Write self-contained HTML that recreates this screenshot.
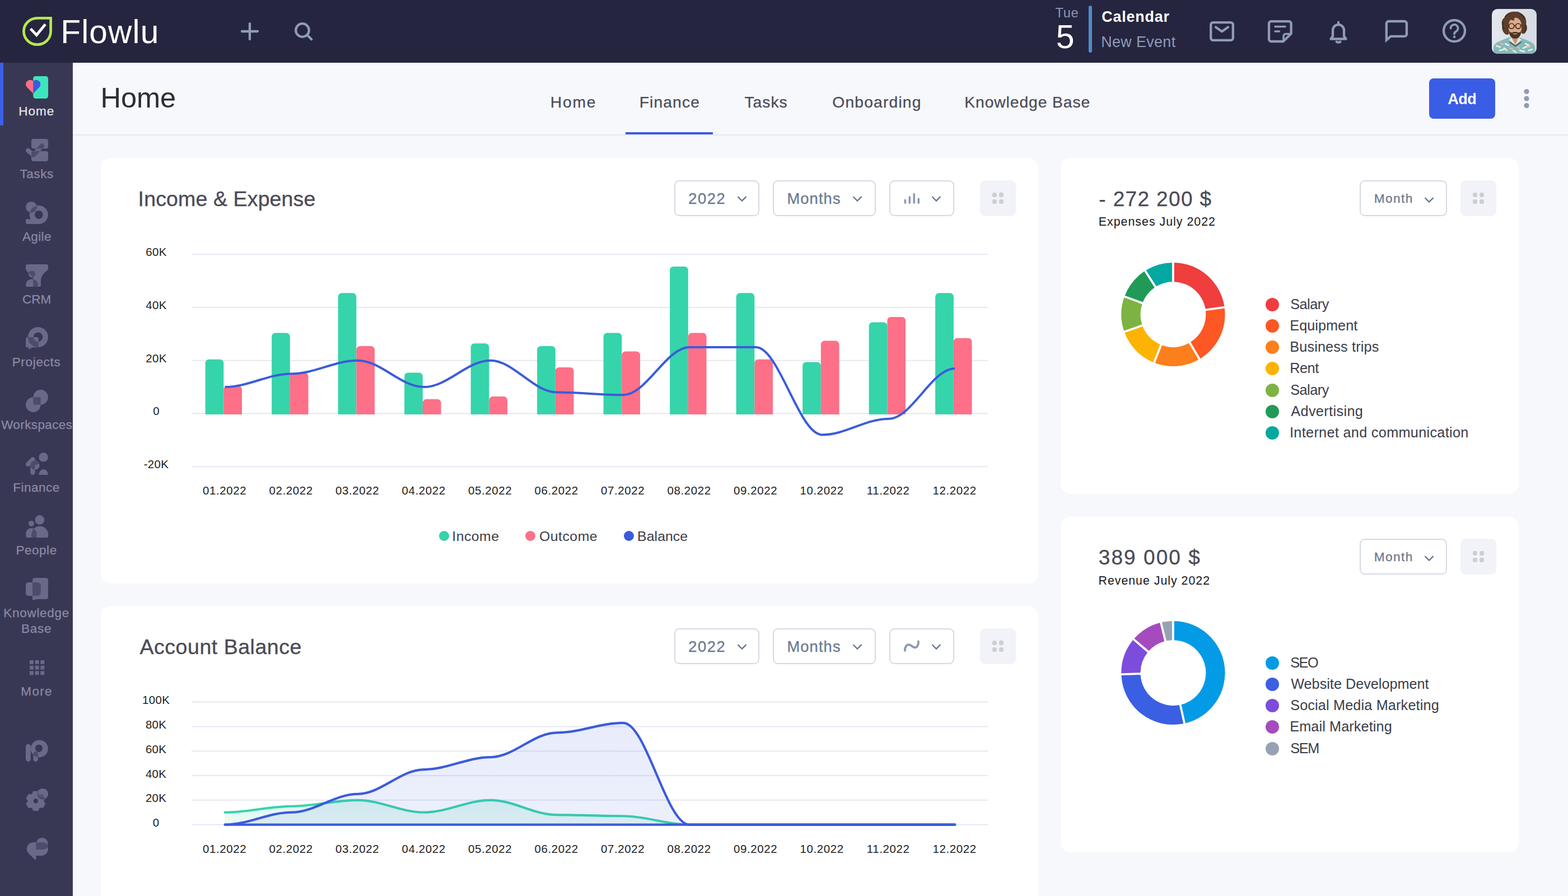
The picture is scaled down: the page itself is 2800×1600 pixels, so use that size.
<!DOCTYPE html>
<html lang="en"><head><meta charset="utf-8"><title>Flowlu - Home - Finance</title>
<style>
*{margin:0;padding:0}
html,body{width:2800px;height:1600px;overflow:hidden}
body{position:relative;background:#f7f8fc;font-family:"Liberation Sans",Arial,sans-serif;-webkit-font-smoothing:antialiased}
.a,.t{position:absolute;display:block}
.t{white-space:nowrap;line-height:1}
svg{overflow:visible}
svg text{font-family:"Liberation Sans",Arial,sans-serif}
.topbar{left:0;top:0;width:2800px;height:112px;background:#26253f}
.sidebar{left:0;top:112px;width:130px;height:1488px;background:#393854}
.main{left:130px;top:112px;width:2670px;height:1488px}
.card{background:#fff;border-radius:18px}
</style></head><body>
<header class="a topbar">
<svg class="a" style="left:36px;top:26px" width="62" height="60" viewBox="36 26 62 60">
<path d="M66.5 32.3 H90.6 V56 A24.1 23.7 0 1 1 66.5 32.3 Z" fill="none" stroke="#b4e84e" stroke-width="4.7" stroke-linejoin="miter"/>
<path d="M54.6 51.3 L65.3 62.6 L81 43.2" fill="none" stroke="#fff" stroke-width="4.8"/>
</svg>
<span class="t" style="left:108.31px;top:28px;font-size:58.6px;letter-spacing:1.12px;color:#fff;">Flowlu</span>
<svg class="a" style="left:420px;top:30px" width="150" height="52" viewBox="420 30 150 52" fill="none" stroke="#8f9cb5" stroke-width="4.3" stroke-linecap="round">
<path d="M432 56H460M446 42.200V70"/>
<circle cx="540" cy="54" r="11.8"/><path d="M548.6 62.6L556.3 70.3"/>
</svg>
<span class="t" style="left:1884.53px;top:12px;font-size:23.6px;letter-spacing:0.7px;color:#8d97b3;">Tue</span>
<span class="t" style="left:1885.64px;top:37px;font-size:59px;color:#fff;">5</span>
<div class="a " style="left:1944px;top:10px;width:6px;height:84px;background:#4f8ccc;border-radius:3px"></div>
<span class="t" style="left:1967.23px;top:17px;font-size:26.8px;letter-spacing:0.87px;color:#fff;font-weight:700;">Calendar</span>
<span class="t" style="left:1966.16px;top:62px;font-size:26.8px;letter-spacing:0.42px;color:#8f9bb7;">New Event</span>
<svg class="a" style="left:2150px;top:28px" width="480" height="56" viewBox="2150 28 480 56" fill="none" stroke="#8f9cb5" stroke-width="4.3" stroke-linecap="round" stroke-linejoin="round">
<rect x="2162.2" y="40.2" width="39.6" height="31.6" rx="4"/><path d="M2171 48.5L2182 56.3L2193 48.5"/>
<path d="M2266 42.2a4 4 0 0 1 4-4h31.6a4 4 0 0 1 4 4V60L2291.6 74H2270a4 4 0 0 1-4-4Z"/><path d="M2305 60.5H2296a4 4 0 0 0-4 4V73" stroke-width="3.6"/><path d="M2277 47.5H2295M2277 56H2284.5" stroke-width="3.6"/>
<path d="M2376.5 69.5H2403.5L2400 64.5V54A10 10 0 0 0 2380 54V64.5Z"/><path d="M2390 41.5V39.5M2386.5 74.5Q2390 77 2393.500 74.5" stroke-width="4"/>
<path d="M2475.800 71.500V42a4 4 0 0 1 4-4H2507.900a4 4 0 0 1 4 4V60.900a4 4 0 0 1-4 4H2483.500Z" stroke-linejoin="miter" stroke-miterlimit="6"/>
<circle cx="2597" cy="55" r="19"/><path d="M2590.500 50.5a6.5 6.500 0 1 1 9.500 5.700c-2.200 1.200-3 2.300-3 4.300" stroke-width="3.8"/><circle cx="2597" cy="65.800" r="2.400" fill="#8f9cb5" stroke="none"/>
</svg>
<div class="a avatar" style="left:2664px;top:16px;width:80px;height:80px;border-radius:10px;overflow:hidden"><svg width="80" height="80" viewBox="0 0 80 80" style="overflow:hidden">
<defs><linearGradient id="avbg" x1="0" y1="0" x2="1" y2="0"><stop offset="0" stop-color="#e4e7ed"/><stop offset="1" stop-color="#d6dae2"/></linearGradient></defs>
<rect width="80" height="80" fill="url(#avbg)"/>
<path d="M3 80V68C4 63 8 60 15 57L30 51H50L66 57C72 60 76 63 77 68V80Z" fill="#86b9ba"/>
<path d="M8 66l7 2M14 74l8-2M24 62l6 3M22 70l5 4M56 70l7-3M60 62l6 3M50 74l8 2M66 74l6-2M38 74l5 3" stroke="#e9efe9" stroke-width="2.600" stroke-linecap="round" fill="none"/>
<path d="M16 62l4 1M32 70l4 1M64 68l4-1M46 68l3 2" stroke="#e8b9a0" stroke-width="2.600" stroke-linecap="round" fill="none"/>
<path d="M34 47H49V58L42 66L33 58Z" fill="#c9977c"/>
<path d="M30 55l5-4 7 13ZM53 55l-5-4-6 13Z" fill="#dfe8e6"/>
<path d="M31 57.500l4 3 7 5 7-5 4-3-1 3-10 7-10-7Z" fill="#3c4a55"/>
<path d="M41 5C33 4 25 9 22 16C17 19 17 27 19 30C17 34 19 41 24 45C27 47 31 46 31 42L30 28C33 24 37 20 42 19C47 20 51 23 52 28L53 43C56 46 60 44 61 40C64 36 63 30 61 27C63 20 59 11 52 8C49 5 45 4 41 5Z" fill="#5b3f2b"/>
<path d="M24 14q3-5 8-6M50 8q6 3 8 9M20 24q-2 6 1 10M60 30q2 5-1 10" stroke="#3f2a1c" stroke-width="2" fill="none" stroke-linecap="round"/>
<path d="M30 30C30 21 35 15.500 41.500 15.500S53 21 53 30V39C53 47 48 52 41.500 52S30 47 30 39Z" fill="#dbab8e"/>
<path d="M30 36C30 47 35 53 41.500 53S53 47 53 36C52 41 50 42.500 47 42C44 40.500 39 40.500 36 42C33 42.500 31 41 30 36Z" fill="#4e3323"/>
<path d="M36.500 43.500q5 3.500 10 0q-5 1-10 0Z" fill="#f3e9e4"/>
<circle cx="35.200" cy="30.600" r="4.600" fill="none" stroke="#4a2c1c" stroke-width="1.700"/><circle cx="47" cy="30.600" r="4.600" fill="none" stroke="#4a2c1c" stroke-width="1.700"/><path d="M39.800 30h2.600M30.600 29.500l-2-1M51.600 29.500l2-1" stroke="#4a2c1c" stroke-width="1.500"/>
<path d="M33 19q3-5 8-4q-2 3-1 6q-4-1-7-2Z" fill="#5b3f2b"/>
</svg></div>
</header>
<nav class="a sidebar">
<div class="a " style="left:0px;top:0px;width:6px;height:112px;background:#3d60e8"></div>
<svg class="a" style="left:45px;top:24px" width="40" height="40" viewBox="0 0 40 40"><rect x="14.200" y="0" width="26.800" height="40" rx="4.500" fill="#3ee5bc"/><path d="M14.200 31L2.700 19.300A7.700 7.700 0 0 1 14.200 9.100Z" fill="#fd6f86"/><path d="M14.200 31L25.700 19.300A7.700 7.700 0 0 0 14.200 9.100Z" fill="#3b5bdb"/></svg>
<span class="t" style="left:33.35px;top:76px;font-size:22.5px;letter-spacing:0.95px;color:#e6e6ee;-webkit-text-stroke:.25px;">Home</span>
<svg class="a" style="left:45px;top:136px" width="40" height="40" viewBox="0 0 40 40"><defs><clipPath id="ck1"><rect x="11" y="0" width="30" height="17.500" rx="4"/><rect x="11" y="21.700" width="30" height="18.300" rx="4"/></clipPath></defs><rect x="11" y="0" width="30" height="17.500" rx="4" fill="#6a6987"/><rect x="11" y="21.700" width="30" height="18.300" rx="4" fill="#6a6987"/><path id="ckp" d="M5 20.800L14.700 28.800L30 12.500" stroke="#6a6987" stroke-width="8" stroke-linecap="round" stroke-linejoin="round" fill="none"/><path d="M5 20.800L14.700 28.800L30 12.500" stroke="#4d4c6c" stroke-width="8" stroke-linecap="round" stroke-linejoin="round" fill="none" clip-path="url(#ck1)"/></svg>
<span class="t" style="left:35.4px;top:188px;font-size:22.5px;letter-spacing:0.61px;color:#8b8aa6;-webkit-text-stroke:.25px;">Tasks</span>
<svg class="a" style="left:45px;top:248px" width="40" height="40" viewBox="0 0 40 40"><defs><clipPath id="ck2"><circle cx="24.300" cy="23.500" r="16.500"/></clipPath></defs><circle cx="10.900" cy="9.800" r="9.900" fill="#6a6987"/><circle cx="24.300" cy="23.500" r="16.500" fill="#6a6987"/><path d="M1 31.300H24V40H4a3 3 0 0 1-3-3Z" fill="#6a6987"/><circle cx="24.300" cy="23.500" r="7.400" fill="#393854"/><circle cx="10.900" cy="9.800" r="9.900" fill="#4d4c6c" clip-path="url(#ck2)"/></svg>
<span class="t" style="left:39.9px;top:300px;font-size:22.5px;letter-spacing:0.39px;color:#8b8aa6;-webkit-text-stroke:.25px;">Agile</span>
<svg class="a" style="left:45px;top:360px" width="40" height="40" viewBox="0 0 40 40"><defs><clipPath id="ck3"><path id="fn" d="M1 3a3 3 0 0 1 3-3h34a3 3 0 0 1 3 3v4.500q0 2-2 3.500C33 16 28 21 28 30v7a3 3 0 0 1-3 3H14.200V26q0-2-1.700-4L2.500 11.500Q1 10 1 8Z"/></clipPath></defs><path d="M1 3a3 3 0 0 1 3-3h34a3 3 0 0 1 3 3v4.500q0 2-2 3.500C33 16 28 21 28 30v7a3 3 0 0 1-3 3H14.200V26q0-2-1.700-4L2.500 11.500Q1 10 1 8Z" fill="#6a6987"/><circle cx="12" cy="17.500" r="6" fill="#6a6987"/><path d="M1 37a11 10.500 0 0 1 22 0a3 3 0 0 1-3 3H4a3 3 0 0 1-3-3Z" fill="#6a6987"/><g clip-path="url(#ck3)" fill="#4d4c6c"><circle cx="12" cy="17.500" r="6"/><path d="M1 37a11 10.500 0 0 1 22 0a3 3 0 0 1-3 3H4a3 3 0 0 1-3-3Z"/></g></svg>
<span class="t" style="left:39.93px;top:412px;font-size:22.5px;letter-spacing:-0.01px;color:#8b8aa6;-webkit-text-stroke:.25px;">CRM</span>
<svg class="a" style="left:45px;top:472px" width="40" height="40" viewBox="0 0 40 40"><defs><clipPath id="ck4"><path clip-rule="evenodd" d="M22.900 0.100a18 18 0 1 0 .01 0ZM23 9.700a8.200 8.200 0 1 0 .01 0Z"/></clipPath></defs><path fill-rule="evenodd" d="M22.900 0.100a18 18 0 1 0 .01 0ZM23 9.700a8.200 8.200 0 1 0 .01 0Z" fill="#6a6987"/><path d="M1 21.400a3.500 3.500 0 0 1 3.500-3.500H20a4 4 0 0 1 4 4V33a3.500 3.500 0 0 1-3.500 3.500H12L7.300 39.900a.6 .6 0 0 1-.9-.5V36.500H4.500A3.500 3.500 0 0 1 1 33Z" fill="#6a6987"/><path d="M1 21.400a3.500 3.500 0 0 1 3.500-3.500H20a4 4 0 0 1 4 4V33a3.500 3.500 0 0 1-3.500 3.500H12L7.300 39.900a.6 .6 0 0 1-.9-.5V36.500H4.500A3.500 3.500 0 0 1 1 33Z" fill="#4d4c6c" clip-path="url(#ck4)"/></svg>
<span class="t" style="left:21.65px;top:524px;font-size:22.5px;letter-spacing:0.69px;color:#8b8aa6;-webkit-text-stroke:.25px;">Projects</span>
<svg class="a" style="left:45px;top:584px" width="40" height="40" viewBox="0 0 40 40"><circle cx="27.600" cy="13.300" r="13.300" fill="#6a6987"/><circle cx="14.300" cy="26.700" r="13.300" fill="#6a6987"/><rect x="14.300" y="13.300" width="13.300" height="13.400" fill="#4d4c6c"/></svg>
<span class="t" style="left:2.14px;top:636px;font-size:22.5px;letter-spacing:0.39px;color:#8b8aa6;-webkit-text-stroke:.25px;">Workspaces</span>
<svg class="a" style="left:45px;top:696px" width="40" height="40" viewBox="0 0 40 40"><circle cx="32.600" cy="8.500" r="8.300" fill="#6a6987"/><path d="M24.300 40a8.300 10 0 0 1 16.600 0Z" fill="#6a6987"/><path d="M5 21L13.400 12.500" stroke="#6a6987" stroke-width="8" stroke-linecap="round" fill="none"/><path d="M13.400 13V35.800" stroke="#6a6987" stroke-width="8.300" stroke-linecap="round" fill="none"/><circle cx="17.400" cy="22.800" r="8.200" fill="#6a6987"/><path d="M17.400 22.800L25.300 20.600A8.200 8.200 0 1 0 17.400 31Z" fill="#4d4c6c"/></svg>
<span class="t" style="left:23.2px;top:748px;font-size:22.5px;letter-spacing:0.52px;color:#8b8aa6;-webkit-text-stroke:.25px;">Finance</span>
<svg class="a" style="left:45px;top:808px" width="40" height="40" viewBox="0 0 40 40"><defs><clipPath id="ck5"><path d="M11.200 34.600a15 15 0 0 1 30 0V37a3 3 0 0 1-3 3H11.200Z"/></clipPath></defs><circle cx="25.900" cy="8.400" r="8.300" fill="#6a6987"/><circle cx="10.900" cy="14.900" r="5" fill="#6a6987"/><path d="M11.200 34.600a15 15 0 0 1 30 0V37a3 3 0 0 1-3 3H11.200Z" fill="#6a6987"/><path d="M1.300 32.500a9.600 9.600 0 0 1 19.200 0V40H4.300a3 3 0 0 1-3-3Z" fill="#6a6987"/><path d="M1.300 32.500a9.600 9.600 0 0 1 19.200 0V40H4.300a3 3 0 0 1-3-3Z" fill="#4d4c6c" clip-path="url(#ck5)"/></svg>
<span class="t" style="left:28.4px;top:860px;font-size:22.5px;letter-spacing:0.54px;color:#8b8aa6;-webkit-text-stroke:.25px;">People</span>
<svg class="a" style="left:45px;top:920px" width="40" height="40" viewBox="0 0 40 40"><defs><clipPath id="ck6"><path d="M13.100 4a4 4 0 0 1 4-4H36.900a4 4 0 0 1 4 4V34a4 4 0 0 1-4 4H21L14 39.700a.7 .7 0 0 1-.9-.7Z"/></clipPath></defs><rect x="1" y="8" width="26.900" height="24" rx="4.500" fill="#6a6987"/><path d="M13.100 4a4 4 0 0 1 4-4H36.900a4 4 0 0 1 4 4V34a4 4 0 0 1-4 4H21L14 39.700a.7 .7 0 0 1-.9-.7Z" fill="#6a6987"/><rect x="1" y="8" width="26.900" height="24" rx="6" fill="#4d4c6c" clip-path="url(#ck6)"/></svg>
<span class="t" style="left:6.2px;top:972px;font-size:22.5px;letter-spacing:0.73px;color:#8b8aa6;-webkit-text-stroke:.25px;">Knowledge</span>
<span class="t" style="left:38.1px;top:1000px;font-size:22.5px;letter-spacing:0.7px;color:#8b8aa6;-webkit-text-stroke:.25px;">Base</span>
<svg class="a" style="left:52.800px;top:1066.7px" width="27" height="27" viewBox="0 0 27 27"><rect x="0" y="0" width="6.800" height="6.800" fill="#6a6987"/><rect x="0" y="9.7" width="6.800" height="6.800" fill="#6a6987"/><rect x="0" y="19.4" width="6.800" height="6.800" fill="#6a6987"/><rect x="9.7" y="0" width="6.800" height="6.800" fill="#6a6987"/><rect x="9.7" y="9.7" width="6.800" height="6.800" fill="#6a6987"/><rect x="9.7" y="19.4" width="6.800" height="6.800" fill="#6a6987"/><rect x="19.4" y="0" width="6.800" height="6.800" fill="#6a6987"/><rect x="19.4" y="9.7" width="6.800" height="6.800" fill="#6a6987"/><rect x="19.4" y="19.4" width="6.800" height="6.800" fill="#6a6987"/></svg>
<span class="t" style="left:37.35px;top:1112px;font-size:22.5px;letter-spacing:1.34px;color:#8b8aa6;-webkit-text-stroke:.25px;">More</span>
<svg class="a" style="left:45px;top:1208px" width="40" height="40" viewBox="0 0 40 40"><defs><clipPath id="ck7"><circle cx="25.300" cy="16.900" r="15.500"/></clipPath></defs><path fill-rule="evenodd" d="M25.300 1.400a15.500 15.500 0 1 0 .01 0ZM24.400 9.700a6.600 6.600 0 1 0 .01 0Z" fill="#6a6987"/><rect x="1" y="8.800" width="8.800" height="31.100" rx="4.400" fill="#6a6987"/><rect x="14.400" y="22.300" width="8.600" height="17.600" rx="4.300" fill="#6a6987"/><rect x="14.400" y="22.300" width="8.600" height="17.600" rx="4.300" fill="#4d4c6c" clip-path="url(#ck7)"/></svg>
<svg class="a" style="left:45px;top:1296px" width="40" height="40" viewBox="0 0 40 40"><defs><clipPath id="ck8"><path d="M24.4 9.8L23.0 5.6L14.6 5.6L13.2 9.8L10.7 11.2L6.4 10.4L2.2 17.6L5.1 21.0L5.1 23.8L2.2 27.2L6.4 34.4L10.7 33.6L13.2 35.0L14.6 39.2L23.0 39.2L24.4 35.0L26.9 33.6L31.2 34.4L35.4 27.2L32.5 23.8L32.5 21.0L35.4 17.6L31.2 10.4L26.9 11.2Z"/></clipPath></defs><circle cx="31.200" cy="9.800" r="9.800" fill="#6a6987"/><path d="M24.4 9.8L23.0 5.6L14.6 5.6L13.2 9.8L10.7 11.2L6.4 10.4L2.2 17.6L5.1 21.0L5.1 23.8L2.2 27.2L6.4 34.4L10.7 33.6L13.2 35.0L14.6 39.2L23.0 39.2L24.4 35.0L26.9 33.6L31.2 34.4L35.4 27.2L32.5 23.8L32.5 21.0L35.4 17.6L31.2 10.4L26.9 11.2Z" fill="#6a6987" stroke="#6a6987" stroke-width="1.500" stroke-linejoin="round"/><circle cx="18.800" cy="22.400" r="4.100" fill="#393854"/><circle cx="31.200" cy="9.800" r="9.800" fill="#4d4c6c" clip-path="url(#ck8)"/><path d="M21.500 6.500c2 6 7 9 13 7.500" stroke="#6a6987" stroke-width="1.600" fill="none" opacity=".7"/></svg>
<svg class="a" style="left:45px;top:1384px" width="40" height="40" viewBox="0 0 40 40"><circle cx="30.100" cy="10.500" r="10.600" fill="#6a6987"/><path d="M12.800 8.300H29.100a11.800 11.800 0 0 1 0 23.600H19.300V38.600a1 1 0 0 1-1.700.7L6.500 28.500A11.800 11.800 0 0 1 12.800 8.300Z" fill="#6a6987"/><path d="M19.300 8.300H31C36 8.300 40 11 40.900 15.400C39 19 35 21 31 21H19.300Z" fill="#4d4c6c"/></svg>
</nav>
<main class="a main">
<span class="t" style="left:49.45px;top:38px;font-size:50.6px;letter-spacing:-0.09px;color:#2d2d33;">Home</span>
<span class="t" style="left:852.74px;top:56px;font-size:28.3px;letter-spacing:1.76px;color:#4a4b57;-webkit-text-stroke:.25px #4a4b57;">Home</span>
<span class="t" style="left:1011.74px;top:56px;font-size:28.3px;letter-spacing:1.08px;color:#4a4b57;-webkit-text-stroke:.25px #4a4b57;">Finance</span>
<span class="t" style="left:1199.43px;top:56px;font-size:28.3px;letter-spacing:0.99px;color:#4a4b57;-webkit-text-stroke:.25px #4a4b57;">Tasks</span>
<span class="t" style="left:1356.23px;top:56px;font-size:28.3px;letter-spacing:1.15px;color:#4a4b57;-webkit-text-stroke:.25px #4a4b57;">Onboarding</span>
<span class="t" style="left:1592.24px;top:56px;font-size:28.3px;letter-spacing:0.89px;color:#4a4b57;-webkit-text-stroke:.25px #4a4b57;">Knowledge Base</span>
<div class="a " style="left:0px;top:128px;width:2670px;height:2px;background:#e5e8f3"></div>
<div class="a " style="left:987px;top:124px;width:156px;height:4px;background:#3b5de0"></div>
<div class="a btn-add" style="left:2422px;top:28px;width:118px;height:72px;background:#3a5de6;border-radius:8px"></div>
<span class="t" style="left:2455.32px;top:52px;font-size:27px;letter-spacing:-0.51px;color:#fff;font-weight:700;">Add</span>
<svg class="a" style="left:2589.8px;top:44.2px" width="12" height="40" viewBox="0 0 12 40" fill="#909bb2"><circle cx="6" cy="7.500" r="4.600"/><circle cx="6" cy="20" r="4.600"/><circle cx="6" cy="32.500" r="4.600"/></svg>
<section class="a card" style="left:50px;top:170px;width:1674px;height:760px">
<span class="t" style="left:66.62px;top:55px;font-size:37.6px;letter-spacing:0.09px;color:#4a4b55;-webkit-text-stroke:.35px #4a4b55;">Income &amp; Expense</span>
<div class="a dd" style="left:1024px;top:40px;width:152px;height:64px;border:2px solid #d5d9e4;border-radius:9px;box-sizing:border-box;background:#fff"></div>
<span class="t" style="left:1049.33px;top:59px;font-size:27.4px;letter-spacing:1.49px;color:#6b7b93;-webkit-text-stroke:.35px #6b7b93;">2022</span>
<svg class="a" style="left:1134px;top:66.2px" width="22" height="14" viewBox="0 0 22 14" fill="none" stroke="#65748b" stroke-width="2.300" stroke-linecap="square" stroke-linejoin="miter"><path d="M4.300 4L11 10.600L17.700 4"/></svg>
<div class="a dd" style="left:1200px;top:40px;width:184px;height:64px;border:2px solid #d5d9e4;border-radius:9px;box-sizing:border-box;background:#fff"></div>
<span class="t" style="left:1225.41px;top:59px;font-size:27.4px;letter-spacing:1.08px;color:#6b7b93;-webkit-text-stroke:.35px #6b7b93;">Months</span>
<svg class="a" style="left:1340.3px;top:66.2px" width="22" height="14" viewBox="0 0 22 14" fill="none" stroke="#65748b" stroke-width="2.300" stroke-linecap="square" stroke-linejoin="miter"><path d="M4.300 4L11 10.600L17.700 4"/></svg>
<div class="a dd" style="left:1408px;top:40px;width:116px;height:64px;border:2px solid #d5d9e4;border-radius:9px;box-sizing:border-box;background:#fff"></div>
<svg class="a" style="left:1432.5px;top:59px" width="34" height="26" viewBox="0 0 34 26" fill="none" stroke="#8a98b0" stroke-width="3.500" stroke-linecap="round"><path d="M3.300 16.200V21.250M11.300 11V21.250M19.300 5.400V21.250M27.300 14.200V21.250"/></svg>
<svg class="a" style="left:1480.5px;top:66.2px" width="22" height="14" viewBox="0 0 22 14" fill="none" stroke="#65748b" stroke-width="2.300" stroke-linecap="square" stroke-linejoin="miter"><path d="M4.300 4L11 10.600L17.700 4"/></svg>
<div class="a gbtn" style="left:1570px;top:40px;width:64px;height:64px;border-radius:9px;background:#f1f3f8"><svg width="64" height="64" viewBox="0 0 64 64"><rect x="22.1" y="22.1" width="7.800" height="7.800" rx="2.400" fill="#c9ced9"/><rect x="22.1" y="34.1" width="7.800" height="7.800" rx="2.400" fill="#c9ced9"/><rect x="34.1" y="22.1" width="7.800" height="7.800" rx="2.400" fill="#c9ced9"/><rect x="34.1" y="34.1" width="7.800" height="7.800" rx="2.400" fill="#c9ced9"/></svg></div>
<svg class="a chart" style="left:0;top:0" width="1674" height="760" viewBox="180 282 1674 760">
<path d="M342 454.25H1764" stroke="#e6e8f2" stroke-width="2"/>
<path d="M342 549H1764" stroke="#e6e8f2" stroke-width="2"/>
<path d="M342 643.75H1764" stroke="#e6e8f2" stroke-width="2"/>
<path d="M342 738.5H1764" stroke="#e6e8f2" stroke-width="2"/>
<path d="M342 833.25H1764" stroke="#e6e8f2" stroke-width="2"/>
<path d="M366.65 740V648.25a6.5 6.5 0 0 1 6.5 -6.5H392.85a6.5 6.5 0 0 1 6.5 6.5V740Z" fill="#36d4ab"/>
<path d="M399.35 740V695.62a6.5 6.5 0 0 1 6.5 -6.5H425.55a6.5 6.5 0 0 1 6.5 6.5V740Z" fill="#fd7088"/>
<path d="M485.15 740V600.88a6.5 6.5 0 0 1 6.5 -6.5H511.35a6.5 6.5 0 0 1 6.5 6.5V740Z" fill="#36d4ab"/>
<path d="M517.85 740V671.94a6.5 6.5 0 0 1 6.5 -6.5H544.05a6.5 6.5 0 0 1 6.5 6.5V740Z" fill="#fd7088"/>
<path d="M603.65 740V529.81a6.5 6.5 0 0 1 6.5 -6.5H629.85a6.5 6.5 0 0 1 6.5 6.5V740Z" fill="#36d4ab"/>
<path d="M636.35 740V624.56a6.5 6.5 0 0 1 6.5 -6.5H662.55a6.5 6.5 0 0 1 6.5 6.5V740Z" fill="#fd7088"/>
<path d="M722.15 740V671.94a6.5 6.5 0 0 1 6.5 -6.5H748.35a6.5 6.5 0 0 1 6.5 6.5V740Z" fill="#36d4ab"/>
<path d="M754.85 740V719.31a6.5 6.5 0 0 1 6.5 -6.5H781.05a6.5 6.5 0 0 1 6.5 6.5V740Z" fill="#fd7088"/>
<path d="M840.65 740V619.83a6.5 6.5 0 0 1 6.5 -6.5H866.85a6.5 6.5 0 0 1 6.5 6.5V740Z" fill="#36d4ab"/>
<path d="M873.35 740V714.58a6.5 6.5 0 0 1 6.5 -6.5H899.55a6.5 6.5 0 0 1 6.5 6.5V740Z" fill="#fd7088"/>
<path d="M959.15 740V624.56a6.5 6.5 0 0 1 6.5 -6.5H985.35a6.5 6.5 0 0 1 6.5 6.5V740Z" fill="#36d4ab"/>
<path d="M991.85 740V662.46a6.5 6.5 0 0 1 6.5 -6.5H1018.05a6.5 6.5 0 0 1 6.5 6.5V740Z" fill="#fd7088"/>
<path d="M1077.65 740V600.88a6.5 6.5 0 0 1 6.5 -6.5H1103.85a6.5 6.5 0 0 1 6.5 6.5V740Z" fill="#36d4ab"/>
<path d="M1110.35 740V634.04a6.5 6.5 0 0 1 6.5 -6.5H1136.55a6.5 6.5 0 0 1 6.5 6.5V740Z" fill="#fd7088"/>
<path d="M1196.15 740V482.44a6.5 6.5 0 0 1 6.5 -6.5H1222.35a6.5 6.5 0 0 1 6.5 6.5V740Z" fill="#36d4ab"/>
<path d="M1228.85 740V600.88a6.5 6.5 0 0 1 6.5 -6.5H1255.05a6.5 6.5 0 0 1 6.5 6.5V740Z" fill="#fd7088"/>
<path d="M1314.65 740V529.81a6.5 6.5 0 0 1 6.5 -6.5H1340.85a6.5 6.5 0 0 1 6.5 6.5V740Z" fill="#36d4ab"/>
<path d="M1347.35 740V648.25a6.5 6.5 0 0 1 6.5 -6.5H1373.55a6.5 6.5 0 0 1 6.5 6.5V740Z" fill="#fd7088"/>
<path d="M1433.15 740V652.99a6.5 6.5 0 0 1 6.5 -6.5H1459.35a6.5 6.5 0 0 1 6.5 6.5V740Z" fill="#36d4ab"/>
<path d="M1465.85 740V615.09a6.5 6.5 0 0 1 6.5 -6.5H1492.05a6.5 6.5 0 0 1 6.5 6.5V740Z" fill="#fd7088"/>
<path d="M1551.65 740V581.92a6.5 6.5 0 0 1 6.5 -6.5H1577.85a6.5 6.5 0 0 1 6.5 6.5V740Z" fill="#36d4ab"/>
<path d="M1584.35 740V572.45a6.5 6.5 0 0 1 6.5 -6.5H1610.55a6.5 6.5 0 0 1 6.5 6.5V740Z" fill="#fd7088"/>
<path d="M1670.15 740V529.81a6.5 6.5 0 0 1 6.5 -6.5H1696.35a6.5 6.5 0 0 1 6.5 6.5V740Z" fill="#36d4ab"/>
<path d="M1702.85 740V610.35a6.5 6.5 0 0 1 6.5 -6.5H1729.05a6.5 6.5 0 0 1 6.5 6.5V740Z" fill="#fd7088"/>
<path d="M401.75 691.12C443.23 691.12 478.77 667.44 520.25 667.44C561.73 667.44 597.27 643.75 638.75 643.75C680.23 643.75 715.77 691.12 757.25 691.12C798.73 691.12 834.27 643.75 875.75 643.75C917.23 643.75 952.77 700.6 994.25 700.6C1035.72 700.6 1071.28 705.34 1112.75 705.34C1154.22 705.34 1189.78 620.06 1231.25 620.06C1272.72 620.06 1308.28 620.06 1349.75 620.06C1391.22 620.06 1426.78 776.4 1468.25 776.4C1509.72 776.4 1545.28 747.98 1586.75 747.98C1628.22 747.98 1663.78 657.96 1705.25 657.96" fill="none" stroke="#3b5bdb" stroke-width="4"/>
<g font-size="20.500" fill="#1f1f24">
<text x="279" y="457.05" text-anchor="middle" letter-spacing=".3">60K</text>
<text x="279" y="551.8" text-anchor="middle" letter-spacing=".3">40K</text>
<text x="279" y="646.55" text-anchor="middle" letter-spacing=".3">20K</text>
<text x="279" y="741.3" text-anchor="middle" letter-spacing=".3">0</text>
<text x="279" y="836.05" text-anchor="middle" letter-spacing=".3">-20K</text>
<text x="401.05" y="882.800" text-anchor="middle" letter-spacing=".6">01.2022</text>
<text x="519.55" y="882.800" text-anchor="middle" letter-spacing=".6">02.2022</text>
<text x="638.05" y="882.800" text-anchor="middle" letter-spacing=".6">03.2022</text>
<text x="756.55" y="882.800" text-anchor="middle" letter-spacing=".6">04.2022</text>
<text x="875.05" y="882.800" text-anchor="middle" letter-spacing=".6">05.2022</text>
<text x="993.55" y="882.800" text-anchor="middle" letter-spacing=".6">06.2022</text>
<text x="1112.05" y="882.800" text-anchor="middle" letter-spacing=".6">07.2022</text>
<text x="1230.55" y="882.800" text-anchor="middle" letter-spacing=".6">08.2022</text>
<text x="1349.05" y="882.800" text-anchor="middle" letter-spacing=".6">09.2022</text>
<text x="1467.55" y="882.800" text-anchor="middle" letter-spacing=".6">10.2022</text>
<text x="1586.05" y="882.800" text-anchor="middle" letter-spacing=".6">11.2022</text>
<text x="1704.55" y="882.800" text-anchor="middle" letter-spacing=".6">12.2022</text>
</g></svg>
<div class="a dot" style="left:604px;top:666.1px;width:18px;height:18px;border-radius:50%;background:#36d4ab"></div>
<span class="t" style="left:627.27px;top:664px;font-size:24.8px;letter-spacing:0.48px;color:#3c3d48;">Income</span>
<div class="a dot" style="left:757.9px;top:666.1px;width:18px;height:18px;border-radius:50%;background:#fd7088"></div>
<span class="t" style="left:782.98px;top:664px;font-size:24.8px;letter-spacing:0.5px;color:#3c3d48;">Outcome</span>
<div class="a dot" style="left:933.8px;top:666.1px;width:18px;height:18px;border-radius:50%;background:#3b5bdb"></div>
<span class="t" style="left:958.12px;top:664px;font-size:24.8px;letter-spacing:0.06px;color:#3c3d48;">Balance</span>
</section>
<section class="a card" style="left:50px;top:970px;width:1674px;height:760px">
<span class="t" style="left:69.5px;top:55px;font-size:37.6px;letter-spacing:0.49px;color:#4a4b55;-webkit-text-stroke:.35px #4a4b55;">Account Balance</span>
<div class="a dd" style="left:1024px;top:40px;width:152px;height:64px;border:2px solid #d5d9e4;border-radius:9px;box-sizing:border-box;background:#fff"></div>
<span class="t" style="left:1049.33px;top:59px;font-size:27.4px;letter-spacing:1.49px;color:#6b7b93;-webkit-text-stroke:.35px #6b7b93;">2022</span>
<svg class="a" style="left:1134px;top:66.2px" width="22" height="14" viewBox="0 0 22 14" fill="none" stroke="#65748b" stroke-width="2.300" stroke-linecap="square" stroke-linejoin="miter"><path d="M4.300 4L11 10.600L17.700 4"/></svg>
<div class="a dd" style="left:1200px;top:40px;width:184px;height:64px;border:2px solid #d5d9e4;border-radius:9px;box-sizing:border-box;background:#fff"></div>
<span class="t" style="left:1225.41px;top:59px;font-size:27.4px;letter-spacing:1.08px;color:#6b7b93;-webkit-text-stroke:.35px #6b7b93;">Months</span>
<svg class="a" style="left:1340.3px;top:66.2px" width="22" height="14" viewBox="0 0 22 14" fill="none" stroke="#65748b" stroke-width="2.300" stroke-linecap="square" stroke-linejoin="miter"><path d="M4.300 4L11 10.600L17.700 4"/></svg>
<div class="a dd" style="left:1408px;top:40px;width:116px;height:64px;border:2px solid #d5d9e4;border-radius:9px;box-sizing:border-box;background:#fff"></div>
<svg class="a" style="left:1428px;top:56px" width="40" height="30" viewBox="1608 1138 40 30" fill="none" stroke="#8d9ab0" stroke-width="3.900" stroke-linecap="round"><path d="M1615.900 1161.700C1615.900 1154 1620 1149.500 1625.500 1152C1629 1153.600 1631 1157 1634.500 1156.300C1638.500 1155.500 1640 1151 1640 1145.500"/></svg>
<svg class="a" style="left:1480.5px;top:66.2px" width="22" height="14" viewBox="0 0 22 14" fill="none" stroke="#65748b" stroke-width="2.300" stroke-linecap="square" stroke-linejoin="miter"><path d="M4.300 4L11 10.600L17.700 4"/></svg>
<div class="a gbtn" style="left:1570px;top:40px;width:64px;height:64px;border-radius:9px;background:#f1f3f8"><svg width="64" height="64" viewBox="0 0 64 64"><rect x="22.1" y="22.1" width="7.800" height="7.800" rx="2.400" fill="#c9ced9"/><rect x="22.1" y="34.1" width="7.800" height="7.800" rx="2.400" fill="#c9ced9"/><rect x="34.1" y="22.1" width="7.800" height="7.800" rx="2.400" fill="#c9ced9"/><rect x="34.1" y="34.1" width="7.800" height="7.800" rx="2.400" fill="#c9ced9"/></svg></div>
<svg class="a chart" style="left:0;top:0" width="1674" height="518" viewBox="180 1082 1674 518">
<defs><linearGradient id="gb" x1="0" y1="0" x2="0" y2="1"><stop offset="0" stop-color="#3b5bdb" stop-opacity=".115"/><stop offset="1" stop-color="#3b5bdb" stop-opacity=".095"/></linearGradient><linearGradient id="gg" x1="0" y1="0" x2="0" y2="1"><stop offset="0" stop-color="#36d3a9" stop-opacity=".16"/><stop offset="1" stop-color="#36d3a9" stop-opacity=".10"/></linearGradient></defs>
<path d="M342 1253.6H1764" stroke="#e6e8f2" stroke-width="2"/>
<path d="M342 1297.4H1764" stroke="#e6e8f2" stroke-width="2"/>
<path d="M342 1341.2H1764" stroke="#e6e8f2" stroke-width="2"/>
<path d="M342 1385H1764" stroke="#e6e8f2" stroke-width="2"/>
<path d="M342 1428.8H1764" stroke="#e6e8f2" stroke-width="2"/>
<path d="M342 1472.6H1764" stroke="#e6e8f2" stroke-width="2"/>
<path d="M401.75 1450.7C443.23 1450.7 478.77 1439.75 520.25 1439.75C561.73 1439.75 597.27 1428.8 638.75 1428.8C680.23 1428.8 715.77 1450.7 757.25 1450.7C798.73 1450.7 834.27 1428.8 875.75 1428.8C917.23 1428.8 952.77 1455.08 994.25 1455.08C1035.72 1455.08 1071.28 1457.27 1112.75 1457.27C1154.22 1457.27 1189.78 1472.6 1231.25 1472.6C1272.72 1472.6 1308.28 1472.6 1349.75 1472.6C1391.22 1472.6 1426.78 1472.6 1468.25 1472.6C1509.72 1472.6 1545.28 1472.6 1586.75 1472.6C1628.22 1472.6 1663.78 1472.6 1705.25 1472.6V1472.6H401.75Z" fill="url(#gg)"/>
<path d="M401.75 1450.7C443.23 1450.7 478.77 1439.75 520.25 1439.75C561.73 1439.75 597.27 1428.8 638.75 1428.8C680.23 1428.8 715.77 1450.7 757.25 1450.7C798.73 1450.7 834.27 1428.8 875.75 1428.8C917.23 1428.8 952.77 1455.08 994.25 1455.08C1035.72 1455.08 1071.28 1457.27 1112.75 1457.27C1154.22 1457.27 1189.78 1472.6 1231.25 1472.6C1272.72 1472.6 1308.28 1472.6 1349.75 1472.6C1391.22 1472.6 1426.78 1472.6 1468.25 1472.6C1509.72 1472.6 1545.28 1472.6 1586.75 1472.6C1628.22 1472.6 1663.78 1472.6 1705.25 1472.6" fill="none" stroke="#36d4ab" stroke-width="4.200" stroke-linecap="round"/>
<path d="M401.75 1472.6C443.23 1472.6 478.77 1450.7 520.25 1450.7C561.73 1450.7 597.27 1417.85 638.75 1417.85C680.23 1417.85 715.77 1374.05 757.25 1374.05C798.73 1374.05 834.27 1352.15 875.75 1352.15C917.23 1352.15 952.77 1308.35 994.25 1308.35C1035.72 1308.35 1071.28 1290.83 1112.75 1290.83C1154.22 1290.83 1189.78 1472.6 1231.25 1472.6C1272.72 1472.6 1308.28 1472.6 1349.75 1472.6C1391.22 1472.6 1426.78 1472.6 1468.25 1472.6C1509.72 1472.6 1545.28 1472.6 1586.75 1472.6C1628.22 1472.6 1663.78 1472.6 1705.25 1472.6V1472.6H401.75Z" fill="url(#gb)"/>
<path d="M401.75 1472.6C443.23 1472.6 478.77 1450.7 520.25 1450.7C561.73 1450.7 597.27 1417.85 638.75 1417.85C680.23 1417.85 715.77 1374.05 757.25 1374.05C798.73 1374.05 834.27 1352.15 875.75 1352.15C917.23 1352.15 952.77 1308.35 994.25 1308.35C1035.72 1308.35 1071.28 1290.83 1112.75 1290.83C1154.22 1290.83 1189.78 1472.6 1231.25 1472.6C1272.72 1472.6 1308.28 1472.6 1349.75 1472.6C1391.22 1472.6 1426.78 1472.6 1468.25 1472.6C1509.72 1472.6 1545.28 1472.6 1586.75 1472.6C1628.22 1472.6 1663.78 1472.6 1705.25 1472.6" fill="none" stroke="#3b5bdb" stroke-width="4.200" stroke-linecap="round"/>
<path d="M401.75 1472.6H1705.25" fill="none" stroke="#3b5bdb" stroke-width="4.200" stroke-linecap="round"/>
<g font-size="20.500" fill="#1f1f24">
<text x="278.600" y="1257.2" text-anchor="middle" letter-spacing=".3">100K</text>
<text x="278.600" y="1301" text-anchor="middle" letter-spacing=".3">80K</text>
<text x="278.600" y="1344.8" text-anchor="middle" letter-spacing=".3">60K</text>
<text x="278.600" y="1388.6" text-anchor="middle" letter-spacing=".3">40K</text>
<text x="278.600" y="1432.4" text-anchor="middle" letter-spacing=".3">20K</text>
<text x="278.600" y="1476.2" text-anchor="middle" letter-spacing=".3">0</text>
<text x="401.05" y="1523" text-anchor="middle" letter-spacing=".6">01.2022</text>
<text x="519.55" y="1523" text-anchor="middle" letter-spacing=".6">02.2022</text>
<text x="638.05" y="1523" text-anchor="middle" letter-spacing=".6">03.2022</text>
<text x="756.55" y="1523" text-anchor="middle" letter-spacing=".6">04.2022</text>
<text x="875.05" y="1523" text-anchor="middle" letter-spacing=".6">05.2022</text>
<text x="993.55" y="1523" text-anchor="middle" letter-spacing=".6">06.2022</text>
<text x="1112.05" y="1523" text-anchor="middle" letter-spacing=".6">07.2022</text>
<text x="1230.55" y="1523" text-anchor="middle" letter-spacing=".6">08.2022</text>
<text x="1349.05" y="1523" text-anchor="middle" letter-spacing=".6">09.2022</text>
<text x="1467.55" y="1523" text-anchor="middle" letter-spacing=".6">10.2022</text>
<text x="1586.05" y="1523" text-anchor="middle" letter-spacing=".6">11.2022</text>
<text x="1704.55" y="1523" text-anchor="middle" letter-spacing=".6">12.2022</text>
</g></svg>
</section>
<section class="a card" style="left:1764px;top:170px;width:818px;height:600px">
<span class="t" style="left:68.33px;top:55px;font-size:37px;letter-spacing:1.36px;color:#4a4b55;-webkit-text-stroke:.3px #4a4b55;">- 272 200 $</span>
<span class="t" style="left:67.8px;top:104px;font-size:21.3px;letter-spacing:1.03px;color:#17171c;">Expenses July 2022</span>
<div class="a dd" style="left:534px;top:40px;width:156px;height:64px;border:2px solid #d5d9e4;border-radius:9px;box-sizing:border-box;background:#fff"></div>
<span class="t" style="left:559.79px;top:62px;font-size:22.6px;letter-spacing:1.46px;color:#6b7b93;-webkit-text-stroke:.35px #6b7b93;">Month</span>
<svg class="a" style="left:647.2px;top:68.4px" width="22" height="14" viewBox="0 0 22 14" fill="none" stroke="#65748b" stroke-width="2.300" stroke-linecap="square" stroke-linejoin="miter"><path d="M4.300 4L11 10.600L17.700 4"/></svg>
<div class="a gbtn" style="left:714px;top:40px;width:64px;height:64px;border-radius:9px;background:#f1f3f8"><svg width="64" height="64" viewBox="0 0 64 64"><rect x="22.1" y="22.1" width="7.800" height="7.800" rx="2.400" fill="#c9ced9"/><rect x="22.1" y="34.1" width="7.800" height="7.800" rx="2.400" fill="#c9ced9"/><rect x="34.1" y="22.1" width="7.800" height="7.800" rx="2.400" fill="#c9ced9"/><rect x="34.1" y="34.1" width="7.800" height="7.800" rx="2.400" fill="#c9ced9"/></svg></div>
<svg class="a" style="left:101px;top:179px" width="200" height="200" viewBox="1995 461 200 200"><path d="M2096.8 468.92A92.6 92.6 0 0 1 2186.32 546.73L2152.44 551.5A58.4 58.4 0 0 0 2096.8 503.13Z" fill="#f03d3d"/><path d="M2186.84 550.5A92.6 92.6 0 0 1 2143.53 640.31L2126.16 610.83A58.4 58.4 0 0 0 2152.97 555.26Z" fill="#fd5724"/><path d="M2140.25 642.23A92.6 92.6 0 0 1 2062.59 648.28L2075.18 616.47A58.4 58.4 0 0 0 2122.89 612.76Z" fill="#fd7e1c"/><path d="M2059.05 646.88A92.6 92.6 0 0 1 2008.32 594.35L2040.55 582.87A58.4 58.4 0 0 0 2071.65 615.07Z" fill="#fdb304"/><path d="M2007.05 590.77A92.6 92.6 0 0 1 2007.36 531.32L2039.47 543.13A58.4 58.4 0 0 0 2039.28 579.29Z" fill="#7cb342"/><path d="M2008.67 527.75A92.6 92.6 0 0 1 2043.29 484.62L2061.77 513.41A58.4 58.4 0 0 0 2040.78 539.56Z" fill="#229a57"/><path d="M2046.48 482.57A92.6 92.6 0 0 1 2093 468.92L2093 503.13A58.4 58.4 0 0 0 2064.97 511.36Z" fill="#03a9a0"/></svg>
<div class="a dot" style="left:366px;top:250.3px;width:24px;height:24px;border-radius:50%;background:#f03d3d"></div>
<span class="t" style="left:410.17px;top:249px;font-size:25.2px;letter-spacing:-0.44px;color:#3a3d4a;">Salary</span>
<div class="a dot" style="left:366px;top:288.35px;width:24px;height:24px;border-radius:50%;background:#fd5724"></div>
<span class="t" style="left:409.28px;top:287px;font-size:25.2px;letter-spacing:0.07px;color:#3a3d4a;">Equipment</span>
<div class="a dot" style="left:366px;top:326.4px;width:24px;height:24px;border-radius:50%;background:#fd7e1c"></div>
<span class="t" style="left:409.28px;top:325px;font-size:25.2px;letter-spacing:0.17px;color:#3a3d4a;">Business trips</span>
<div class="a dot" style="left:366px;top:364.45px;width:24px;height:24px;border-radius:50%;background:#fdb304"></div>
<span class="t" style="left:409.28px;top:363px;font-size:25.2px;letter-spacing:-0.43px;color:#3a3d4a;">Rent</span>
<div class="a dot" style="left:366px;top:402.5px;width:24px;height:24px;border-radius:50%;background:#7cb342"></div>
<span class="t" style="left:410.17px;top:402px;font-size:25.2px;letter-spacing:-0.44px;color:#3a3d4a;">Salary</span>
<div class="a dot" style="left:366px;top:440.55px;width:24px;height:24px;border-radius:50%;background:#229a57"></div>
<span class="t" style="left:411.3px;top:440px;font-size:25.2px;letter-spacing:0.39px;color:#3a3d4a;">Advertising</span>
<div class="a dot" style="left:366px;top:478.6px;width:24px;height:24px;border-radius:50%;background:#03a9a0"></div>
<span class="t" style="left:409.03px;top:478px;font-size:25.2px;letter-spacing:0.34px;color:#3a3d4a;">Internet and communication</span>
</section>
<section class="a card" style="left:1764px;top:810px;width:818px;height:600px">
<span class="t" style="left:67.81px;top:55px;font-size:37px;letter-spacing:2.06px;color:#4a4b55;-webkit-text-stroke:.3px #4a4b55;">389 000 $</span>
<span class="t" style="left:67.5px;top:105px;font-size:21.3px;letter-spacing:1.01px;color:#17171c;">Revenue July 2022</span>
<div class="a dd" style="left:534px;top:40px;width:156px;height:64px;border:2px solid #d5d9e4;border-radius:9px;box-sizing:border-box;background:#fff"></div>
<span class="t" style="left:559.79px;top:62px;font-size:22.6px;letter-spacing:1.46px;color:#6b7b93;-webkit-text-stroke:.35px #6b7b93;">Month</span>
<svg class="a" style="left:647.2px;top:68.4px" width="22" height="14" viewBox="0 0 22 14" fill="none" stroke="#65748b" stroke-width="2.300" stroke-linecap="square" stroke-linejoin="miter"><path d="M4.300 4L11 10.600L17.700 4"/></svg>
<div class="a gbtn" style="left:714px;top:40px;width:64px;height:64px;border-radius:9px;background:#f1f3f8"><svg width="64" height="64" viewBox="0 0 64 64"><rect x="22.1" y="22.1" width="7.800" height="7.800" rx="2.400" fill="#c9ced9"/><rect x="22.1" y="34.1" width="7.800" height="7.800" rx="2.400" fill="#c9ced9"/><rect x="34.1" y="22.1" width="7.800" height="7.800" rx="2.400" fill="#c9ced9"/><rect x="34.1" y="34.1" width="7.800" height="7.800" rx="2.400" fill="#c9ced9"/></svg></div>
<svg class="a" style="left:101px;top:179px" width="200" height="200" viewBox="1995 1101 200 200"><path d="M2096.8 1108.92A92.6 92.6 0 0 1 2116.95 1291.44L2109.49 1258.05A58.4 58.4 0 0 0 2096.8 1143.13Z" fill="#039be5"/><path d="M2113.24 1292.27A92.6 92.6 0 0 1 2002.41 1205.98L2036.61 1205.03A58.4 58.4 0 0 0 2105.78 1258.88Z" fill="#3b5fe3"/><path d="M2002.3 1202.19A92.6 92.6 0 0 1 2023.06 1143.07L2049.16 1165.2A58.4 58.4 0 0 0 2036.5 1201.23Z" fill="#7c4ddb"/><path d="M2025.52 1140.17A92.6 92.6 0 0 1 2071.13 1112L2079.23 1145.24A58.4 58.4 0 0 0 2051.61 1162.3Z" fill="#a64bbe"/><path d="M2074.82 1111.1A92.6 92.6 0 0 1 2093 1108.92L2093 1143.13A58.4 58.4 0 0 0 2082.92 1144.34Z" fill="#96a2b4"/></svg>
<div class="a dot" style="left:366px;top:249.7px;width:24px;height:24px;border-radius:50%;background:#039be5"></div>
<span class="t" style="left:410.17px;top:249px;font-size:25.2px;letter-spacing:-1.4px;color:#3a3d4a;">SEO</span>
<div class="a dot" style="left:366px;top:287.9px;width:24px;height:24px;border-radius:50%;background:#3b5fe3"></div>
<span class="t" style="left:411.24px;top:287px;font-size:25.2px;letter-spacing:0.02px;color:#3a3d4a;">Website Development</span>
<div class="a dot" style="left:366px;top:326.1px;width:24px;height:24px;border-radius:50%;background:#7c4ddb"></div>
<span class="t" style="left:410.17px;top:325px;font-size:25.2px;letter-spacing:0.18px;color:#3a3d4a;">Social Media Marketing</span>
<div class="a dot" style="left:366px;top:364.3px;width:24px;height:24px;border-radius:50%;background:#a64bbe"></div>
<span class="t" style="left:409.28px;top:363px;font-size:25.2px;letter-spacing:0.13px;color:#3a3d4a;">Email Marketing</span>
<div class="a dot" style="left:366px;top:402.5px;width:24px;height:24px;border-radius:50%;background:#96a2b4"></div>
<span class="t" style="left:410.17px;top:402px;font-size:25.2px;letter-spacing:-1.24px;color:#3a3d4a;">SEM</span>
</section>
</main>
</body></html>
